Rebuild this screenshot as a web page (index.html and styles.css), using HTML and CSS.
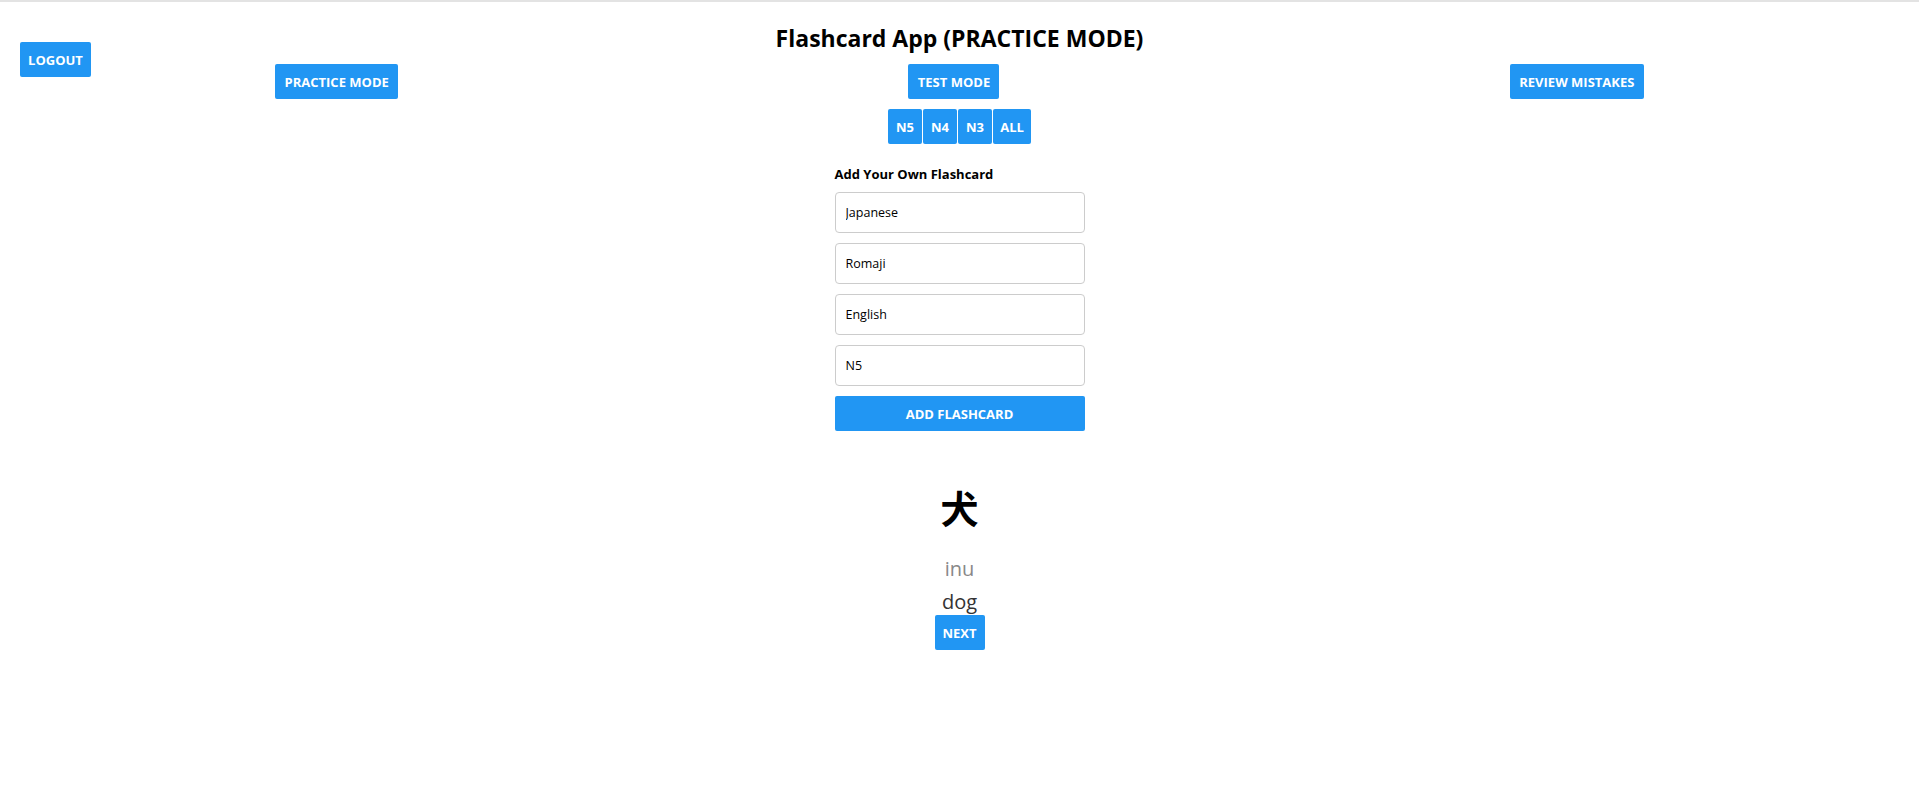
FILE: index.html
```html
<!DOCTYPE html>
<html lang="en">
<head>
<meta charset="utf-8">
<title>Flashcard App</title>
<link rel="stylesheet" href="styles.css">
</head>
<body>
<div class="app">
  <button class="btn logout">LOGOUT</button>
  <h1 class="title">Flashcard App (PRACTICE MODE)</h1>
  <div class="modes">
    <button class="btn">PRACTICE MODE</button>
    <button class="btn">TEST MODE</button>
    <button class="btn">REVIEW MISTAKES</button>
  </div>
  <div class="levels">
    <button class="btn lvl">N5</button>
    <button class="btn lvl">N4</button>
    <button class="btn lvl">N3</button>
    <button class="btn lvl">ALL</button>
  </div>
  <form class="add-form">
    <h3 class="form-title">Add Your Own Flashcard</h3>
    <input class="field" type="text" placeholder="Japanese">
    <input class="field" type="text" placeholder="Romaji">
    <input class="field" type="text" placeholder="English">
    <input class="field" type="text" value="N5">
    <button class="btn add" type="button">ADD FLASHCARD</button>
  </form>
  <div class="card">
    <div class="kanji">犬</div>
    <div class="romaji">inu</div>
    <div class="english">dog</div>
    <button class="btn next">NEXT</button>
  </div>
</div>
</body>
</html>
```
FILE: styles.css
```css
* { box-sizing: border-box; }
html, body { margin: 0; padding: 0; background: #fff; }
body {
  border-top: 2px solid #e3e3e3;
  font-family: "Open Sans", "Noto Sans", Arial, "Noto Sans CJK JP", sans-serif;
  color: #000;
}
.app {
  position: relative;
  padding: 0 20px;
  text-align: center;
}
.btn {
  font-family: inherit;
  font-weight: 700;
  font-size: 13px;
  color: #fff;
  background: #2196f3;
  border: none;
  border-radius: 2px;
  height: 35px;
  padding: 0 7px;
  cursor: pointer;
  white-space: nowrap;
}
.logout {
  position: absolute;
  left: 20px;
  top: 40px;
  width: 71px;
  padding: 0;
}
.title {
  margin: 0;
  padding-top: 20px;
  font-size: 23px;
  line-height: 32px;
  font-weight: 700;
}
.modes {
  display: flex;
  justify-content: space-around;
  margin-top: 10px;
}
.modes .btn:nth-child(1) { width: 123px; }
.modes .btn:nth-child(2) { width: 91px; }
.modes .btn:nth-child(3) { width: 134px; }
.levels {
  display: flex;
  justify-content: center;
  gap: 1px;
  margin-top: 10px;
}
.lvl { width: 34px; padding: 0; }
.lvl:last-child { width: 38px; }
.add-form {
  width: 250px;
  margin: 21px auto 0;
  display: flex;
  flex-direction: column;
  gap: 10px;
  text-align: left;
}
.form-title {
  margin: 0 0 -1px;
  font-size: 13px;
  line-height: 18px;
  font-weight: 700;
}
.field {
  height: 41px;
  width: 250px;
  border: 1px solid #ccc;
  border-radius: 4px;
  padding: 0 10px;
  font-family: inherit;
  font-size: 12.5px;
  color: #000;
  background: #fff;
}
.field::placeholder { color: #000; opacity: 1; }
.add { width: 250px; }
.card {
  margin-top: 51px;
  display: flex;
  flex-direction: column;
  align-items: center;
}
.kanji {
  font-family: "Noto Sans CJK JP", sans-serif;
  font-size: 38px;
  font-weight: 700;
  line-height: 50px;
}
.romaji {
  margin-top: 23px;
  font-size: 20px;
  line-height: 27px;
  color: #888;
}
.english {
  margin-top: 6px;
  font-size: 20px;
  line-height: 27px;
  color: #333;
}
.next { width: 50px; padding: 0; }
```
